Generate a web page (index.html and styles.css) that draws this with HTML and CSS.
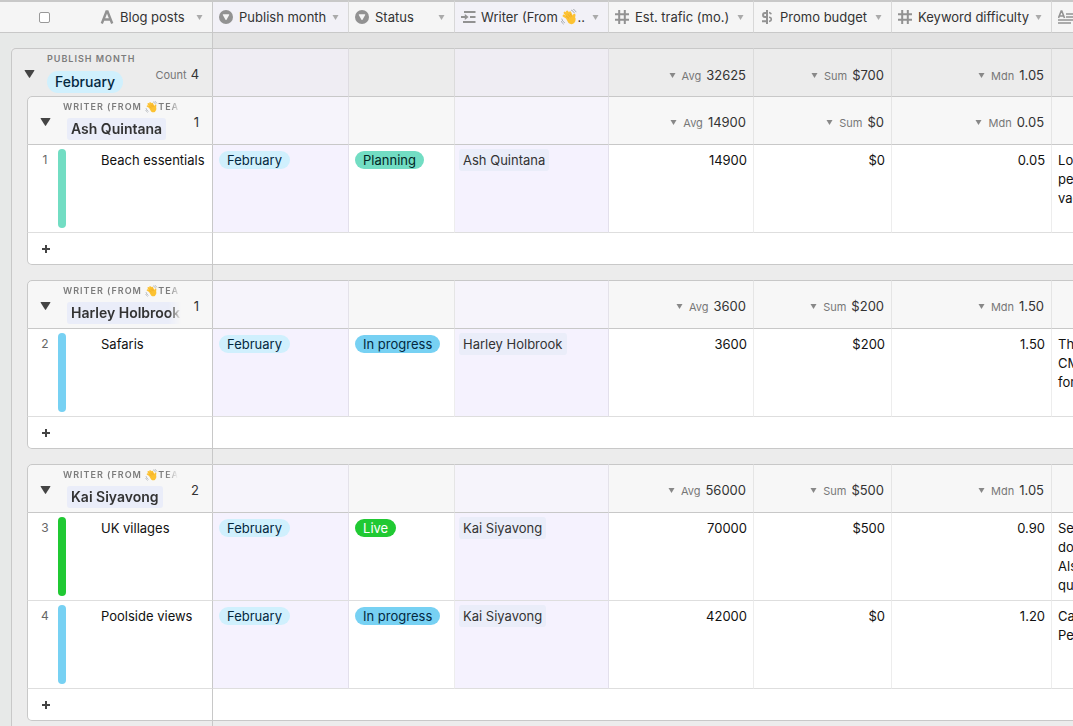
FILE: index.html
```html
<!DOCTYPE html>
<html lang="en">
<head>
<meta charset="utf-8">
<meta name="viewport" content="width=device-width, initial-scale=1">
<title>Blog posts</title>
<link rel="stylesheet" href="styles.css">
</head>
<body>
<svg class="defs" aria-hidden="true">
  <symbol id="caret" viewBox="0 0 6 5"><path d="M0 0h6L3 5z"/></symbol>
  <symbol id="toggle" viewBox="0 0 10 8"><path d="M.6 0h8.8q.8 0 .4.7L5.5 7.6q-.5.6-1 0L.2.7Q-.2 0 .6 0z"/></symbol>
  <symbol id="plus" viewBox="0 0 8 8"><path d="M3 0h2v3h3v2H5v3H3V5H0V3h3z"/></symbol>
  <symbol id="select" viewBox="0 0 14 14"><circle cx="7" cy="7" r="7"/><path class="knock" d="M3.800 5q-.3-.7.5-.7h5.400q.8 0 .5.7L7.500 9.700q-.5.6-1 0z"/></symbol>
  <symbol id="hash" viewBox="0 0 14 14"><path class="line" d="M4.200 0v14M9.800 0v14M0 4.200h14M0 9.800h14"/></symbol>
  <symbol id="letter" viewBox="0 0 14 14"><path class="line bold" d="M1.800 13.500 6.500 1.500h1L12.200 13.500M4 9.500h6"/></symbol>
  <symbol id="lookup" viewBox="0 0 16 14"><path class="line" d="M3 2h11.500M9 7h5.500M2 12h12.500M0 7h5"/><path d="M3.800 4 7.600 7 3.800 10z"/></symbol>
  <symbol id="dollar" viewBox="0 0 14 14"><path class="line" d="M7 0v14"/><path class="line" d="M6.500 3H5Q3 3 3 4.900T5 7h1.500M2 11.300h4.500"/><path class="line thin" d="M9 2.600q1.800.2 2.200 1.700M9 7.200q2.300.2 2.300 2T9 11.400"/></symbol>
  <symbol id="long" viewBox="0 0 16 14"><path class="line thin" d="M.5 8 3.200 1h.6L6.500 8M1.500 6h4M8 4h8M8 7h8M0 10h16M0 13h13"/></symbol>
  <symbol id="wave" viewBox="0 0 16 16"><g class="hand"><path d="M8 10 2.800 6.800M8.500 8.500 3.800 3.800M9.500 8 6.200 2.800M11 8 9 3.500M12.500 10.500 13.300 6"/></g><path class="palm" d="M5 9.500 11 6l3.500 3q.5 3.500-2 5.500-2.500 1.500-5-.5z"/><path class="crease" d="M5 6.800l3 2.600M7 5.300l2.500 3M9 4.600l1.700 3"/><path class="motion" d="M10.500 1.200q2 .8 2.800 2.600M12.500.3q1.800.9 2.500 2.500M.8 10q.5 2.500 2.700 3.700M.4 12.500q.5 1.500 2 2.500"/></symbol>
</svg>
<main class="grid">
<table class="sheet">
  <colgroup>
    <col class="w-gutter"><col class="w-frame"><col class="w-name"><col class="w-month"><col class="w-status"><col class="w-writer"><col class="w-traffic"><col class="w-budget"><col class="w-keyword"><col>
  </colgroup>
  <thead>
    <tr class="fields">
      <th colspan="3" scope="col" class="pane"><div class="field primary"><input type="checkbox" aria-label="Select all records"><svg class="icon"><use href="#letter"/></svg><span>Blog posts</span><button class="menu" aria-label="Blog posts options"><svg><use href="#caret"/></svg></button></div></th>
      <th scope="col" class="tint"><div class="field"><svg class="icon"><use href="#select"/></svg><span>Publish month</span><button class="menu" aria-label="Publish month options"><svg><use href="#caret"/></svg></button></div></th>
      <th scope="col"><div class="field"><svg class="icon"><use href="#select"/></svg><span>Status</span><button class="menu" aria-label="Status options"><svg><use href="#caret"/></svg></button></div></th>
      <th scope="col" class="tint"><div class="field lookup"><svg class="icon wide"><use href="#lookup"/></svg><span>Writer (From <svg class="emoji"><use href="#wave"/></svg>..</span><button class="menu" aria-label="Writer options"><svg><use href="#caret"/></svg></button></div></th>
      <th scope="col"><div class="field"><svg class="icon"><use href="#hash"/></svg><span>Est. trafic (mo.)</span><button class="menu" aria-label="Est. trafic options"><svg><use href="#caret"/></svg></button></div></th>
      <th scope="col"><div class="field"><svg class="icon"><use href="#dollar"/></svg><span>Promo budget</span><button class="menu" aria-label="Promo budget options"><svg><use href="#caret"/></svg></button></div></th>
      <th scope="col"><div class="field"><svg class="icon"><use href="#hash"/></svg><span>Keyword difficulty</span><button class="menu" aria-label="Keyword difficulty options"><svg><use href="#caret"/></svg></button></div></th>
      <th scope="col"><div class="field"><svg class="icon wide"><use href="#long"/></svg></div></th>
    </tr>
  </thead>
  <tbody>
    <tr class="gap top"><td colspan="3" class="pane"></td><td colspan="7"></td></tr>
    <tr class="month">
      <td class="gutter"></td>
      <th colspan="2" scope="rowgroup" class="pane"><div class="group"><button class="toggle" aria-label="Collapse February"><svg><use href="#toggle"/></svg></button><div class="title"><span class="label">PUBLISH MONTH</span><span class="pill blue">February</span></div><span class="count"><small>Count</small>4</span></div></th>
      <td class="tint"></td><td></td><td class="tint"></td>
      <td><button class="sum"><svg><use href="#caret"/></svg><small>Avg</small><span>32625</span></button></td>
      <td><button class="sum"><svg><use href="#caret"/></svg><small>Sum</small><span>$700</span></button></td>
      <td><button class="sum"><svg><use href="#caret"/></svg><small>Mdn</small><span>1.05</span></button></td>
      <td></td>
    </tr>
  </tbody>
  <tbody>
    <tr class="writer">
      <td class="gutter"></td><td class="frame"></td>
      <th scope="rowgroup" class="pane"><div class="group"><button class="toggle" aria-label="Collapse Ash Quintana"><svg><use href="#toggle"/></svg></button><div class="title"><span class="label">WRITER (FROM <svg class="emoji"><use href="#wave"/></svg>TEA</span><span class="chip">Ash Quintana</span></div><span class="count">1</span></div></th>
      <td class="tint"></td><td></td><td class="tint"></td>
      <td><button class="sum"><svg><use href="#caret"/></svg><small>Avg</small><span>14900</span></button></td>
      <td><button class="sum"><svg><use href="#caret"/></svg><small>Sum</small><span>$0</span></button></td>
      <td><button class="sum"><svg><use href="#caret"/></svg><small>Mdn</small><span>0.05</span></button></td>
      <td></td>
    </tr>
    <tr class="record">
      <td class="gutter"></td><td class="frame"></td>
      <th scope="row" class="pane"><div class="name"><span class="num">1</span><i class="bar teal"></i><span>Beach essentials</span></div></th>
      <td class="tint"><span class="pill blue">February</span></td>
      <td><span class="pill teal">Planning</span></td>
      <td class="tint linked"><span class="chip">Ash Quintana</span></td>
      <td class="value">14900</td><td class="value">$0</td><td class="value">0.05</td>
      <td class="notes">Lo<br>pe<br>vac</td>
    </tr>
    <tr class="add"><td class="gutter"></td><td class="frame"></td><td class="pane"><button aria-label="Add record"><svg><use href="#plus"/></svg></button></td><td colspan="7"></td></tr>
    <tr class="gap"><td class="gutter"></td><td colspan="2" class="frame pane"></td><td colspan="7"></td></tr>
  </tbody>
  <tbody>
    <tr class="writer">
      <td class="gutter"></td><td class="frame"></td>
      <th scope="rowgroup" class="pane"><div class="group"><button class="toggle" aria-label="Collapse Harley Holbrook"><svg><use href="#toggle"/></svg></button><div class="title"><span class="label">WRITER (FROM <svg class="emoji"><use href="#wave"/></svg>TEA</span><span class="chip">Harley Holbrook</span></div><span class="count">1</span></div></th>
      <td class="tint"></td><td></td><td class="tint"></td>
      <td><button class="sum"><svg><use href="#caret"/></svg><small>Avg</small><span>3600</span></button></td>
      <td><button class="sum"><svg><use href="#caret"/></svg><small>Sum</small><span>$200</span></button></td>
      <td><button class="sum"><svg><use href="#caret"/></svg><small>Mdn</small><span>1.50</span></button></td>
      <td></td>
    </tr>
    <tr class="record">
      <td class="gutter"></td><td class="frame"></td>
      <th scope="row" class="pane"><div class="name"><span class="num">2</span><i class="bar sky"></i><span>Safaris</span></div></th>
      <td class="tint"><span class="pill blue">February</span></td>
      <td><span class="pill sky">In progress</span></td>
      <td class="tint linked"><span class="chip">Harley Holbrook</span></td>
      <td class="value">3600</td><td class="value">$200</td><td class="value">1.50</td>
      <td class="notes">Th<br>CM<br>for</td>
    </tr>
    <tr class="add"><td class="gutter"></td><td class="frame"></td><td class="pane"><button aria-label="Add record"><svg><use href="#plus"/></svg></button></td><td colspan="7"></td></tr>
    <tr class="gap"><td class="gutter"></td><td colspan="2" class="frame pane"></td><td colspan="7"></td></tr>
  </tbody>
  <tbody>
    <tr class="writer">
      <td class="gutter"></td><td class="frame"></td>
      <th scope="rowgroup" class="pane"><div class="group"><button class="toggle" aria-label="Collapse Kai Siyavong"><svg><use href="#toggle"/></svg></button><div class="title"><span class="label">WRITER (FROM <svg class="emoji"><use href="#wave"/></svg>TEA</span><span class="chip">Kai Siyavong</span></div><span class="count">2</span></div></th>
      <td class="tint"></td><td></td><td class="tint"></td>
      <td><button class="sum"><svg><use href="#caret"/></svg><small>Avg</small><span>56000</span></button></td>
      <td><button class="sum"><svg><use href="#caret"/></svg><small>Sum</small><span>$500</span></button></td>
      <td><button class="sum"><svg><use href="#caret"/></svg><small>Mdn</small><span>1.05</span></button></td>
      <td></td>
    </tr>
    <tr class="record">
      <td class="gutter"></td><td class="frame"></td>
      <th scope="row" class="pane"><div class="name"><span class="num">3</span><i class="bar green"></i><span>UK villages</span></div></th>
      <td class="tint"><span class="pill blue">February</span></td>
      <td><span class="pill green">Live</span></td>
      <td class="tint linked"><span class="chip">Kai Siyavong</span></td>
      <td class="value">70000</td><td class="value">$500</td><td class="value">0.90</td>
      <td class="notes">Se<br>do<br>Als<br>qu</td>
    </tr>
    <tr class="record">
      <td class="gutter"></td><td class="frame"></td>
      <th scope="row" class="pane"><div class="name"><span class="num">4</span><i class="bar sky"></i><span>Poolside views</span></div></th>
      <td class="tint"><span class="pill blue">February</span></td>
      <td><span class="pill sky">In progress</span></td>
      <td class="tint linked"><span class="chip">Kai Siyavong</span></td>
      <td class="value">42000</td><td class="value">$0</td><td class="value">1.20</td>
      <td class="notes">Ca<br>Pe</td>
    </tr>
    <tr class="add"><td class="gutter"></td><td class="frame"></td><td class="pane"><button aria-label="Add record"><svg><use href="#plus"/></svg></button></td><td colspan="7"></td></tr>
    <tr class="gap"><td class="gutter"></td><td colspan="2" class="frame pane"></td><td colspan="7"></td></tr>
  </tbody>
</table>
</main>
</body>
</html>
```
FILE: styles.css
```css
* { box-sizing: border-box; }

body {
  margin: 0;
  background: #ececec;
  color: #333;
  font: 13px/18px Inter, sans-serif;
}

button {
  margin: 0;
  padding: 0;
  border: 0;
  background: none;
  color: inherit;
  font: inherit;
}

svg { display: block; flex: none; fill: currentColor; }
.defs { display: none; }
.line { fill: none; stroke: currentColor; stroke-width: 2; }
.line.thin { stroke-width: 1.6; }
.line.bold { stroke-width: 2.4; }
.knock { fill: #f5f5f5; }

.hand { fill: none; stroke: #fcc232; stroke-width: 2.4; stroke-linecap: round; }
.palm { fill: #fcc232; }
.crease { fill: none; stroke: #e89b1c; stroke-width: .6; }
.motion { fill: none; stroke: #a9adb3; stroke-width: 1; stroke-linecap: round; }

.grid { height: 100vh; overflow: hidden; }

.sheet {
  width: 100%;
  table-layout: fixed;
  border-collapse: separate;
  border-spacing: 0;
}

.w-gutter { width: 11px; }
.w-frame { width: 16px; }
.w-name { width: 186px; }
.w-month { width: 136px; }
.w-status { width: 106px; }
.w-writer { width: 154px; }
.w-traffic { width: 145px; }
.w-budget { width: 138px; }
.w-keyword { width: 160px; }

th, td {
  padding: 0;
  border: 0 solid #c8c8c8;
  font-weight: 400;
  text-align: left;
  vertical-align: top;
  white-space: nowrap;
}

td:not(.gutter, .frame, .pane, :last-child) { border-right: 1px solid rgba(0, 0, 0, .07); }

th.pane, td.pane { border-right: 1px solid #c8c8c8; }
td.gutter { background: #e7e9e8; }
td.frame { border-left: 1px solid #c8c8c8; background: #ececec; }

/* Field names */
.fields th {
  height: 33px;
  border-top: 2px solid #c8c8c8;
  border-bottom: 1px solid #c8c8c8;
  background: #f5f5f5;
  overflow: hidden;
}
.fields th:not(.pane, :last-child) { border-right: 1px solid #d8d8d8; }
.fields .tint { background: #f2f1f7; }

.field { display: flex; align-items: center; gap: 6px; height: 30px; padding: 0 9px 0 6px; }
.field.lookup { gap: 4px; }
.primary { padding-left: 39px; }
.primary input {
  appearance: none;
  width: 11px;
  height: 11px;
  margin: 0 44px 0 0;
  border: 1px solid #999;
  border-radius: 2px;
  background: #fff;
}
.icon { width: 14px; height: 14px; color: #929292; overflow: visible; }
.icon.wide { width: 16px; }
.field .emoji { display: inline-block; width: 16px; height: 16px; vertical-align: -3px; }
.menu { margin-left: auto; color: #aaa; }
.menu svg, .sum svg { width: 7px; height: 5px; }

/* Space between groups */
.gap td { height: 15px; background: #ececec; }
.gap .gutter { background: #e7e9e8; }
.gap.top td { background: #e2e2e2; }
.gap.top .pane { background: #e7e9e8; }

/* Group headings */
.month { background: #e7e9e8; }
.month > *, .writer > :not(.gutter, .frame) { border-top: 1px solid #c8c8c8; }
.month > .gutter { border-top: 0; }
.month > :not(.gutter) { height: 48px; background: #ececec; }
.month th { border-left: 1px solid #c8c8c8; border-top-left-radius: 5px; }
.month > .tint:not(.gutter) { background: #efedf3; }

.writer { background: #ececec; }
.writer > :not(.gutter, .frame) { height: 49px; border-bottom: 1px solid #c8c8c8; background: #f7f7f7; }
.writer th { border-left: 1px solid #c8c8c8; border-top-left-radius: 5px; }
.writer > .tint:not(.gutter, .frame) { background: #f6f4fb; }

.group { display: flex; height: 47px; padding: 0 13px 0 12px; }
.toggle { align-self: flex-start; padding-top: 21px; color: #444; }
.toggle svg { width: 11px; height: 8px; }
.title {
  display: flex;
  flex: 1;
  flex-direction: column;
  align-items: flex-start;
  min-width: 0;
  margin: 0 13px 0 12px;
  padding-top: 4px;
  overflow: hidden;
}
.writer .title { -webkit-mask-image: linear-gradient(to left, transparent, #000 12px); mask-image: linear-gradient(to left, transparent, #000 12px); }
.label { height: 12px; font-size: 9px; line-height: 12px; font-weight: 600; letter-spacing: 1px; color: #7c7c7c; }
.label .emoji { display: inline-block; width: 13px; height: 12px; vertical-align: -3px; }
.title .pill, .title .chip { margin-top: 6px; font-size: 14px; line-height: 22px; }
.title .pill { font-weight: 500; }
.title .chip { margin-top: 5px; margin-left: 4px; font-weight: 600; }
.count { padding-top: 16px; }
.month .count { margin-left: -20px; }
small { margin-right: 4px; font-size: 11px; color: #777; }

.sum { display: flex; align-items: baseline; justify-content: flex-end; width: 100%; padding: 17px 7px 0 0; }
.writer .sum { padding-top: 16px; }
.sum small { margin-right: 5px; }
.sum svg { margin-right: 6px; align-self: center; color: #888; }

/* Records */
.record > * { height: 88px; background: #fff; }
.record > :not(.gutter, .frame) { padding: 6px 6px 0; border-bottom: 1px solid #dedede; color: #111; }
.record > th.pane { padding: 0; border-left: 1px solid #c8c8c8; }
.record > .tint { background: #f5f2fe; }
.record > .linked.tint { padding: 4px 4px 0; }
.record > .value { text-align: right; }
.record > .notes { line-height: 19px; overflow: hidden; }

.name { display: flex; height: 87px; padding: 4px 0; }
.name span { padding-top: 2px; }
.name .num { width: 30px; padding-left: 4px; text-align: center; font-size: 12px; color: #666; }
.bar { width: 8px; margin-right: 35px; border-radius: 4px; }

.pill, .chip { display: inline-block; vertical-align: top; }
.pill { padding: 0 8px; border-radius: 11px; }
.chip { padding: 0 4px; border-radius: 3px; background: #eaedf9; color: #333; line-height: 22px; }
.blue { background: #d0f0fd; color: #04283f; }
.teal { background: #72ddc3; color: #012524; }
.sky { background: #77d1f3; color: #04283f; }
.green { background: #20c933; color: #fff; }

/* New record */
.add > * { height: 32px; background: #fff; }
.add > .gutter { background: #e7e9e8; }
.add > .frame { background: #ececec; }
.add > :not(.gutter, .frame) { border-bottom: 1px solid #c8c8c8; }
.add { background: #ececec; }
.add > td.pane { border-left: 1px solid #c8c8c8; border-bottom-left-radius: 5px; }
.add button { padding: 12px 14px 11px; color: #444; }
.add svg { width: 8px; height: 8px; }
.record > .gutter { background: #e7e9e8; }
.record > .frame { background: #ececec; }
```
